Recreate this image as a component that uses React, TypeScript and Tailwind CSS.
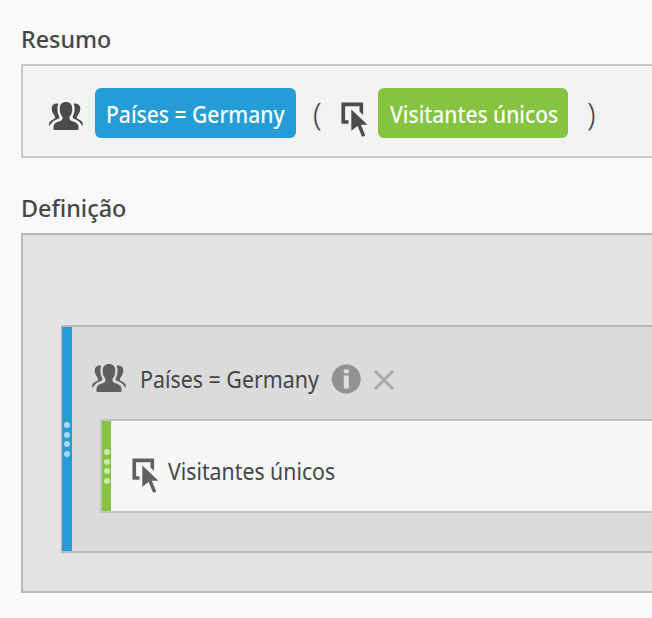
function Visitors({ className }: { className: string }) {
  return (
    <svg viewBox="0 0 34 28" className={`h-7 w-[34px] shrink-0 ${className}`} fill="currentColor">
      <path d="M17 0c4.100 0 6.300 2.600 6.200 6.400 0 2.200-.2 4.500-1.100 6.100-.8 1.500-1.700 2-1.700 3.400 0 1.900 1.600 2.600 4.100 3.600 3.300 1.300 5.100 2.700 5.100 5.900v1.200c0 .9-.4 1.400-1.300 1.400H5.700c-.9 0-1.300-.5-1.300-1.400v-1.200c0-3.200 1.800-4.600 5.100-5.900 2.500-1 4.100-1.700 4.100-3.600 0-1.400-.9-1.900-1.700-3.400-.9-1.600-1.100-3.900-1.100-6.100C10.700 2.600 12.900 0 17 0z" />
      <path d="M9.400 1.700C8.500 3.300 8.300 5 8.500 7.400c.1 2.700.5 4.800 1.500 6.300.8 1.500.2 2.700-1.500 3.400-3 1.300-5 2.500-6.200 4.400L.1 23.900c-.4-3.500 1-5.200 3.900-6.400 1.600-.7 2.100-1.200 2.100-2.200 0-1-.7-1.600-1.300-2.700-1-1.400-2.200-4.100-2.100-6.500.1-3.200 3-5.100 6.700-4.400z" />
      <path d="M24.600 1.700c.9 1.600 1.100 3.300.9 5.700-.1 2.700-.5 4.800-1.500 6.300-.8 1.500-.2 2.700 1.500 3.400 3 1.300 5 2.500 6.200 4.400l2.200 2.400c.4-3.500-1-5.200-3.900-6.400-1.600-.7-2.100-1.200-2.100-2.200 0-1 .7-1.600 1.300-2.700 1-1.400 2.200-4.100 2.100-6.500-.1-3.200-3-5.100-6.700-4.400z" />
    </svg>
  );
}

function Hit({ className }: { className: string }) {
  return (
    <svg viewBox="0 0 27 35" className={`h-[35px] w-[27px] shrink-0 ${className}`} fill="currentColor">
      <path d="M1 .5h20.500a.6.6 0 0 1 .6.600v11.900L18.500 9.600V4.200H4.100v14h3.400v3.500H1a.6.6 0 0 1-.6-.6V1.100A.6.600 0 0 1 1 .5z" />
      <path d="M10.300 7.500 26.500 22.800h-6.700l4.200 9.900c.2.500 0 .9-.5 1.200l-1.500.7c-.6.2-1 0-1.200-.6l-4.200-10-6.300 4.800z" />
    </svg>
  );
}

function Handle({ className }: { className: string }) {
  return (
    <div className={`flex shrink-0 flex-col items-center justify-center gap-[3.5px] pt-px ${className}`}>
      {[0, 1, 2, 3].map((n) => (
        <i key={n} className="size-1.5 shrink-0 rounded-full bg-white/60" />
      ))}
    </div>
  );
}

export default function App() {
  return (
    <main className="h-[618px] w-[652px] overflow-hidden bg-[#f9f9f9] pl-[21px] font-['Noto_Sans',sans-serif] text-[23px] leading-8 text-[#464646]">
      <h2 className="h-16 pt-[23px] text-2xl leading-8 font-medium">
        <span className="inline-block origin-left scale-x-[0.97]">Resumo</span>
      </h2>
      <section className="flex h-[94px] items-center border-2 border-r-0 border-[#c8c8c8] bg-[#f3f3f3] pt-1 pl-[26px]">
        <Visitors className="mt-1.5 text-[#4b4b4b]" />
        <div className="ml-3 flex h-[50px] w-[201px] items-center rounded-md bg-[#269cd6] pt-0.5 pl-[11px] font-medium text-white">
          <span className="origin-left scale-x-[0.915] whitespace-nowrap">Países = Germany</span>
        </div>
        <span className="ml-[17px] w-7 text-[31px] font-light">(</span>
        <Hit className="mt-3 text-[#4b4b4b]" />
        <div className="ml-2.5 flex h-[50px] w-[190px] items-center rounded-md bg-[#84c440] pt-0.5 pl-3 font-medium text-white">
          <span className="origin-left scale-x-[0.91] whitespace-nowrap">Visitantes únicos</span>
        </div>
        <span className="ml-[19px] text-[31px] font-light">)</span>
      </section>
      <h2 className="h-[75px] pt-[34px] text-2xl leading-8 font-medium">
        <span className="inline-block origin-left scale-x-[0.975]">Definição</span>
      </h2>
      <section className="h-[360px] border-2 border-r-0 border-[#b9b9b9] bg-[#e3e3e3] pt-[90px] pl-[38px]">
        <div className="flex h-[228px] border-y-2 border-l border-[#b9b9b9] bg-[#dbdbdb]">
          <Handle className="w-[10px] bg-[#269cd6]" />
          <div className="min-w-0 flex-1 pl-[28px]">
            <div className="flex h-[92px] items-center pt-3">
              <Visitors className="mb-0.5 -ml-2 text-[#5f5f5f]" />
              <div className="ml-[14px] w-[191px]">
                <span className="inline-block origin-left scale-x-[0.93] whitespace-nowrap">Países = Germany</span>
              </div>
              <svg viewBox="0 0 30 30" className="size-[30px] shrink-0">
                <circle cx="15.300" cy="15" r="14.500" fill="#929292" />
                <path d="M12.800 5.500h5v3.800h-5zM12.800 11.500h5v13h-5z" fill="#e0e0e0" />
              </svg>
              <svg viewBox="0 0 20 20" className="mt-0.5 ml-[13px] size-5 shrink-0" fill="none" stroke="#aaa" strokeWidth="3">
                <path d="M1 1 19 19M19 1 1 19" />
              </svg>
            </div>
            <div className="flex h-[94px] border-y-2 border-l-2 border-[#c3c3c3] bg-[#f6f8f7]">
              <Handle className="w-[9px] bg-[#84c440]" />
              <div className="flex items-center pt-2.5 pl-[21px]">
                <Hit className="mt-2 text-[#606060]" />
                <span className="ml-[9px] origin-left scale-x-[0.925] whitespace-nowrap">Visitantes únicos</span>
              </div>
            </div>
          </div>
        </div>
      </section>
    </main>
  );
}
